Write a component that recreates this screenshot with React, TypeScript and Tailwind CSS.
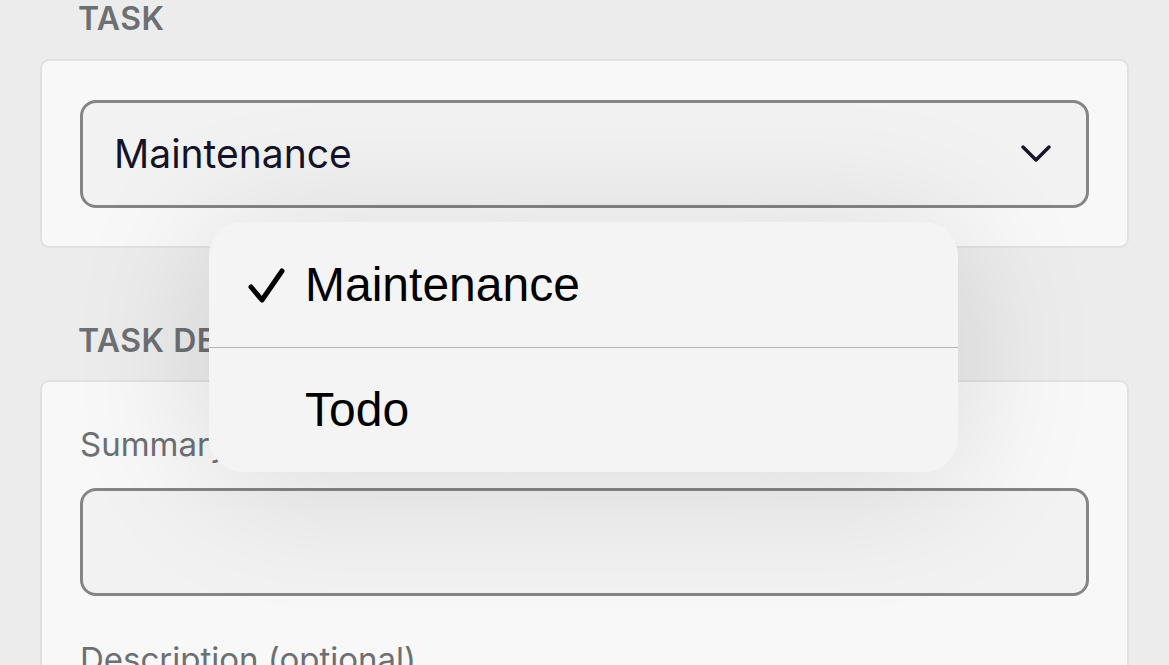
import { useState } from 'react';

const options = ['Maintenance', 'Todo'];

export default function App() {
    const [selected, setSelected] = useState('Maintenance');

    return (
        <div
            className="relative w-[1169px] h-[665px] overflow-hidden bg-[#ececec] px-10"
            style={{ fontFamily: 'Inter, "Noto Sans", sans-serif' }}
        >
            {/* Task section */}
            <div className="h-[37px] pl-[38px] text-[32px] font-semibold leading-[37px] tracking-[0.5px] text-[#6c6f73]">
                TASK
            </div>
            <div className="mt-[22px] rounded-[9px] border-2 border-[#e1e1e1] bg-[#f8f8f8] px-[38px] pt-[39px] pb-[38px]">
                <div className="flex h-[108px] items-center justify-between rounded-[16px] border-[3px] border-[#858585] bg-[#f2f2f2] pl-[31px] pr-[34px]">
                    <span className="text-[39px] text-[#15132a]">{selected}</span>
                    <svg width="32" height="20" viewBox="0 0 32 20" fill="none">
                        <polyline points="3,3 16,16 29,3" stroke="#18162b" strokeWidth="3.5" strokeLinecap="round" strokeLinejoin="round" />
                    </svg>
                </div>
            </div>

            {/* Task details section */}
            <div className="mt-[74px] h-[37px] pl-[38px] text-[32px] font-semibold leading-[37px] tracking-[0.5px] text-[#6c6f73]">
                TASK DETAILS
            </div>
            <div className="mt-[21px] rounded-[9px] border-2 border-[#e1e1e1] bg-[#f8f8f8] px-[38px] pt-[42px]">
                <div className="text-[33px] leading-[40px] text-[#6c6f73]">Summary</div>
                <div className="mt-[24px] h-[108px] rounded-[16px] border-[3px] border-[#858585] bg-[#f2f2f2]" />
                <div className="mt-[43px] text-[33px] leading-[40px] text-[#6c6f73]">Description (optional)</div>
                <div className="mt-[24px] h-[108px] rounded-[16px] border-[3px] border-[#858585] bg-[#f2f2f2]" />
            </div>

            {/* Open dropdown menu */}
            <div
                className="absolute left-[209px] top-[222px] w-[749px] overflow-hidden rounded-[34px] bg-[#f4f4f4] shadow-[0_10px_140px_rgba(0,0,0,0.13)]"
                style={{ fontFamily: '"Liberation Sans", Arial, sans-serif' }}
            >
                {options.map((opt, i) => (
                    <div
                        key={opt}
                        onClick={() => setSelected(opt)}
                        className={`relative flex h-[125px] items-center pl-[96px] text-[48px] text-black ${i > 0 ? 'border-t border-[#b4b4b4]' : ''}`}
                    >
                        {opt === selected && (
                            <svg className="absolute left-[38px] top-[45px]" width="40" height="38" viewBox="0 0 40 38" fill="none">
                                <polyline points="4,20 15,33 35,4" stroke="#000" strokeWidth="5" strokeLinecap="round" strokeLinejoin="round" />
                            </svg>
                        )}
                        {opt}
                    </div>
                ))}
            </div>
        </div>
    );
}
